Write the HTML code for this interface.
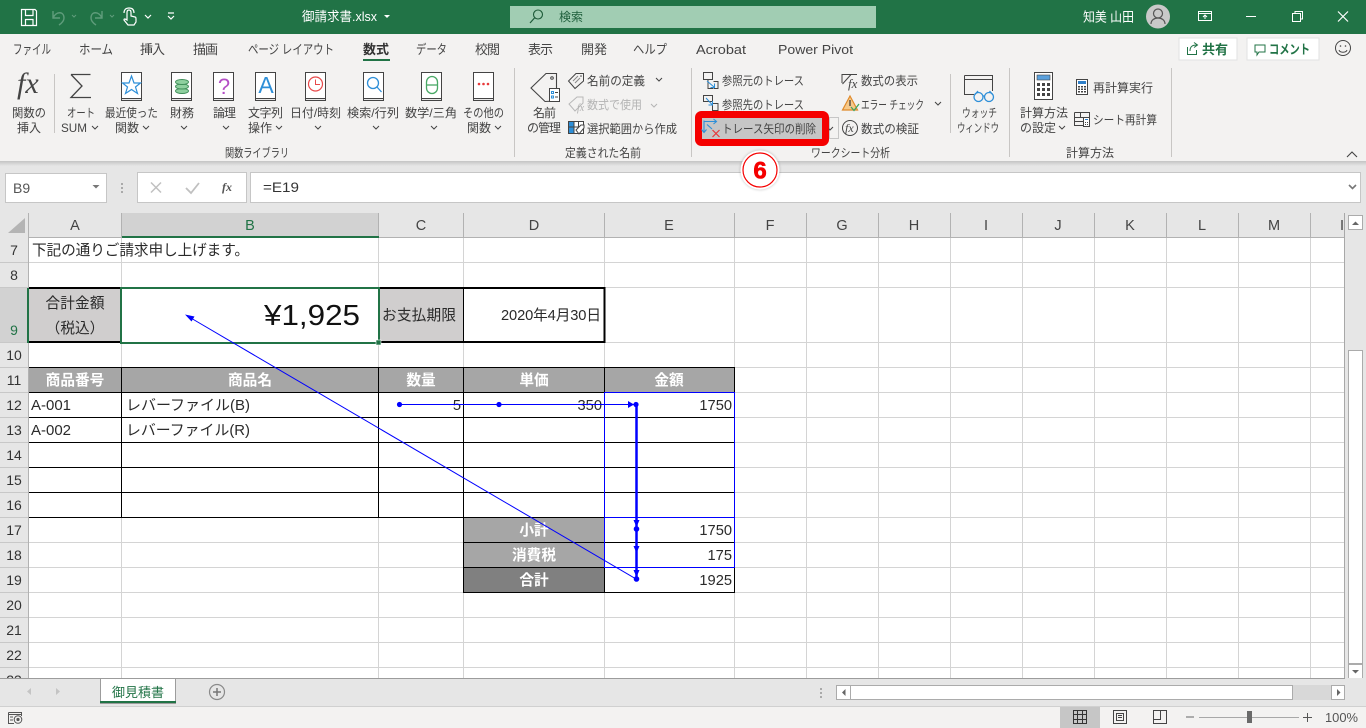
<!DOCTYPE html>
<html lang="ja"><head><meta charset="utf-8"><title>御請求書.xlsx - Excel</title>
<style>
html,body{margin:0;padding:0;width:1366px;height:728px;overflow:hidden;background:#e6e6e6}
svg{display:block;position:absolute;left:0;top:0}
text{font-family:"Liberation Sans","Noto Sans CJK JP",sans-serif;font-size:12px;fill:#444}
.r text{font-size:12px}
.c text,text.c{font-size:14.67px;fill:#2a2a2a}
.h text{font-size:14.5px;fill:#444;text-anchor:middle}
.w text{font-size:14.67px;fill:#fff;font-weight:700;text-anchor:middle}
.n text{font-size:14px;fill:#333;text-anchor:middle}
.t text{font-size:13px}
.e{text-anchor:end}
.m{text-anchor:middle}
.b{fill:none;stroke:#000;stroke-width:1}
</style></head><body>
<svg width="1366" height="728" viewBox="0 0 1366 728" xmlns="http://www.w3.org/2000/svg">
<defs>
<linearGradient id="sh" x1="0" y1="0" x2="0" y2="1"><stop offset="0" stop-color="#c4c4c4"/><stop offset="1" stop-color="#e6e6e6"/></linearGradient>
<filter id="gl" x="-30%" y="-30%" width="160%" height="160%"><feGaussianBlur stdDeviation="1.2"/></filter>
<symbol id="bk" viewBox="0 0 22 29" width="22" height="29"><path d="M.5 .5H20.500V28.500H2.500Q.5 28.500 .5 26.500Z" fill="#fff" stroke="#444"/><path d="M.5 26.500H20.500V28.500H.5Z" fill="#e8e8e8" stroke="#444"/></symbol>
</defs>
<!-- title bar -->
<rect width="1366" height="34" fill="#217346"/>
<g fill="none" stroke="#fff" stroke-width="1.2"><path d="M21.500 9.500H35L36.500 11V25.500H21.500Z"/><path d="M25.500 9.500V15.500H33V9.500M25.500 25.500V19.500H33V25.500M25.500 19.500H33"/></g>
<g fill="none" stroke="#5f9c7b" stroke-width="1.4"><path d="M53 11V18H60M53 18C56 11 64 11 64 18C64 21 62 23 59 25"/><path d="M102 11V18H95M102 18C99 11 91 11 91 18C91 21 93 23 96 25"/><path d="M72 15l2 2 2-2M110 15l2 2 2-2" stroke-width="1"/></g>
<path d="M127 20V12.500Q127 10 129 10T131 12.500V16L135 17Q136 17 136 19V22L134 25H128L124 20Q124 18 127 20ZM124 13Q124 8 129 8T134 13" fill="none" stroke="#fff" stroke-width="1.200"/>
<path d="M145 15l3 3 3-3M168 13h6M168 16l3 3 3-3" fill="none" stroke="#fff" stroke-width="1.200"/>
<text x="302" y="21" textLength="75" lengthAdjust="spacingAndGlyphs" style="fill:#fff;font-size:13px">御請求書.xlsx</text>
<path d="M384 15h6l-3 3z" fill="#fff"/>
<rect x="510" y="6" width="366" height="22" fill="#a1cdb3"/>
<circle cx="538" cy="14.500" r="4.500" fill="none" stroke="#1d5a38" stroke-width="1.100"/><path d="M534.500 18L530 23" stroke="#1d5a38" stroke-width="1.200"/>
<text x="559" y="21" textLength="24" style="fill:#1f5f3c;font-size:12px">検索</text>
<text x="1083" y="21.500" textLength="51" lengthAdjust="spacingAndGlyphs" style="fill:#fff;font-size:13px">知美 山田</text>
<circle cx="1158" cy="16.500" r="12" fill="#c9c9c9"/><circle cx="1158" cy="13.500" r="4.500" fill="none" stroke="#555" stroke-width="1.200"/><path d="M1151 24C1151 16 1165 16 1165 24" fill="none" stroke="#555" stroke-width="1.200"/>
<g fill="none" stroke="#fff" stroke-width="1"><path d="M1198.500 11.500H1211.500V20.500H1198.500ZM1198.500 13.500H1211.500M1205 19V15M1203 17l2-2 2 2"/><path d="M1246 16.500H1256"/><path d="M1292.500 13.500H1300.500V21.500H1292.500ZM1295 13V11.500H1302.500V19H1301"/><path d="M1338 11.500L1348 21.500M1348 11.500L1338 21.500" stroke-width="1.200"/></g>
<!-- ribbon -->
<rect y="34" width="1366" height="127" fill="#f3f2f1"/>
<rect y="161" width="1366" height="5" fill="url(#sh)"/>
<rect y="166" width="1366" height="512" fill="#e6e6e6"/>
<g class="t">
<text x="13" y="54" textLength="38" lengthAdjust="spacingAndGlyphs">ファイル</text>
<text x="79" y="54" textLength="34" lengthAdjust="spacingAndGlyphs">ホーム</text>
<text x="140" y="54" textLength="25">挿入</text>
<text x="193" y="54" textLength="25">描画</text>
<text x="248" y="54" textLength="86" lengthAdjust="spacingAndGlyphs">ページ レイアウト</text>
<text x="363" y="54" textLength="26" style="font-weight:700;fill:#333">数式</text>
<text x="416" y="54" textLength="31" lengthAdjust="spacingAndGlyphs">データ</text>
<text x="475" y="54" textLength="25">校閲</text>
<text x="528" y="54" textLength="25">表示</text>
<text x="581" y="54" textLength="26">開発</text>
<text x="633" y="54" textLength="34" lengthAdjust="spacingAndGlyphs">ヘルプ</text>
<text x="696" y="54" textLength="50" lengthAdjust="spacingAndGlyphs">Acrobat</text>
<text x="778" y="54" textLength="75" lengthAdjust="spacingAndGlyphs">Power Pivot</text>
</g>
<rect x="363" y="59" width="27" height="2" fill="#217346"/>
<!-- share -->
<rect x="1179" y="38" width="58" height="22" fill="#fff" stroke="#e2e2e2"/>
<rect x="1247" y="38" width="72" height="22" fill="#fff" stroke="#e2e2e2"/>
<path d="M1188 47.500H1187.500V54.500H1196.500V50M1190 51C1190 46 1193 45 1197 45M1194 42.500L1197.500 45L1194 47.500" fill="none" stroke="#217346"/>
<text x="1202" y="54" textLength="26" style="fill:#217346;font-size:13px;font-weight:700">共有</text>
<path d="M1255 45H1265V52H1259L1257 55V52H1255Z" fill="none" stroke="#217346"/>
<text x="1269" y="54" textLength="41" lengthAdjust="spacingAndGlyphs" style="fill:#217346;font-size:13px;font-weight:700">コメント</text>
<circle cx="1343" cy="48" r="7.500" fill="none" stroke="#444"/><path d="M1339 50C1340 53 1346 53 1347 50" fill="none" stroke="#444"/><circle cx="1340.500" cy="46" r=".8" fill="#444"/><circle cx="1345.500" cy="46" r=".8" fill="#444"/>
<!-- separators -->
<path d="M54.500 74V133M514.500 68V157M691.500 68V157M950.500 74V133M1009.500 68V157M1171.500 68V157" stroke="#c8c6c4"/>
<!-- function lib icons -->
<text x="17" y="93" style="font-family:'Liberation Serif',serif;font-style:italic;font-size:30px;fill:#444">fx</text>
<path d="M71 74.500H90.500M71 74.500L82 86 71 97.500H91" fill="none" stroke="#444" stroke-width="1.300"/>
<use href="#bk" x="121" y="72"/><use href="#bk" x="171" y="72"/><use href="#bk" x="213" y="72"/><use href="#bk" x="255" y="72"/><use href="#bk" x="305" y="72"/><use href="#bk" x="363" y="72"/><use href="#bk" x="421" y="72"/><use href="#bk" x="473" y="72"/>
<path d="M131.500 76L134 83H140.500L135.500 87L137.500 93.500L131.500 89.500L125.500 93.500L127.500 87L122.500 83H129Z" fill="none" stroke="#2e8fd8" stroke-width="1.200"/>
<g fill="#8fd09f" stroke="#3e8e58" stroke-width=".9"><ellipse cx="182" cy="91" rx="6.500" ry="2.500"/><ellipse cx="182" cy="86.500" rx="6.500" ry="2.500"/><ellipse cx="182" cy="82" rx="6.500" ry="2.500"/></g>
<text x="224" y="94" class="m" style="font-size:22px;fill:#b44fc6">?</text>
<text x="266" y="93" class="m" style="font-size:23px;fill:#2e8fd8">A</text>
<circle cx="315.500" cy="84" r="7" fill="none" stroke="#e8494a" stroke-width="1.200"/><path d="M315.500 79.500V84.500H320" fill="none" stroke="#e8494a"/>
<circle cx="373" cy="83" r="5.500" fill="none" stroke="#2e8fd8" stroke-width="1.300"/><path d="M377 87L381.500 92" stroke="#2e8fd8" stroke-width="1.300"/>
<rect x="426.500" y="76.500" width="11" height="17" rx="5.500" fill="none" stroke="#49a865" stroke-width="1.300"/><path d="M427 85H437" stroke="#49a865" stroke-width="1.300"/>
<g fill="#e8393a"><circle cx="479" cy="84" r="1.300"/><circle cx="483.500" cy="84" r="1.300"/><circle cx="488" cy="84" r="1.300"/></g>
<!-- function lib labels -->
<g class="r">
<text x="12" y="117" textLength="34" lengthAdjust="spacingAndGlyphs">関数の</text><text x="17" y="132" textLength="24">挿入</text>
<text x="67" y="117" textLength="28" lengthAdjust="spacingAndGlyphs">オート</text><text x="61" y="132" textLength="26" lengthAdjust="spacingAndGlyphs">SUM</text>
<text x="105" y="117" textLength="53" lengthAdjust="spacingAndGlyphs">最近使った</text><text x="115" y="132" textLength="24">関数</text>
<text x="170" y="117" textLength="24">財務</text>
<text x="213" y="117" textLength="23">論理</text>
<text x="248" y="117" textLength="35">文字列</text><text x="248" y="132" textLength="24">操作</text>
<text x="290" y="117" textLength="51" lengthAdjust="spacingAndGlyphs">日付/時刻</text>
<text x="347" y="117" textLength="52" lengthAdjust="spacingAndGlyphs">検索/行列</text>
<text x="405" y="117" textLength="52" lengthAdjust="spacingAndGlyphs">数学/三角</text>
<text x="463" y="117" textLength="41" lengthAdjust="spacingAndGlyphs">その他の</text><text x="467" y="132" textLength="24">関数</text>
<text x="225" y="157" textLength="64" lengthAdjust="spacingAndGlyphs">関数ライブラリ</text>
<!-- names -->
<text x="533" y="117" textLength="23">名前</text><text x="527" y="132" textLength="34">の管理</text>
<text x="587" y="85" textLength="58" lengthAdjust="spacingAndGlyphs">名前の定義</text>
<text x="587" y="109" textLength="55" lengthAdjust="spacingAndGlyphs" style="fill:#b4b4b4">数式で使用</text>
<text x="587" y="133" textLength="90" lengthAdjust="spacingAndGlyphs">選択範囲から作成</text>
<text x="565" y="157" textLength="76" lengthAdjust="spacingAndGlyphs">定義された名前</text>
<!-- audit -->
<text x="722" y="85" textLength="82" lengthAdjust="spacingAndGlyphs">参照元のトレース</text>
<text x="722" y="109" textLength="82" lengthAdjust="spacingAndGlyphs">参照先のトレース</text>
<text x="861" y="85" textLength="57" lengthAdjust="spacingAndGlyphs">数式の表示</text>
<text x="861" y="109" textLength="63" lengthAdjust="spacingAndGlyphs">エラー チェック</text>
<text x="861" y="133" textLength="58" lengthAdjust="spacingAndGlyphs">数式の検証</text>
<text x="811" y="157" textLength="79" lengthAdjust="spacingAndGlyphs">ワークシート分析</text>
<text x="962" y="117" textLength="35" lengthAdjust="spacingAndGlyphs">ウォッチ</text><text x="957" y="132" textLength="42" lengthAdjust="spacingAndGlyphs">ウィンドウ</text>
<!-- calc -->
<text x="1020" y="117" textLength="48">計算方法</text><text x="1020" y="132" textLength="36">の設定</text>
<text x="1093" y="92" textLength="60">再計算実行</text>
<text x="1093" y="124" textLength="64" lengthAdjust="spacingAndGlyphs">シート再計算</text>
<text x="1066" y="157" textLength="48">計算方法</text>
</g>
<!-- chevrons -->
<path d="M92 126l3 3 3-3M143 126l3 3 3-3M181 126l3 3 3-3M223 126l3 3 3-3M276 126l3 3 3-3M315 126l3 3 3-3M373 126l3 3 3-3M431 126l3 3 3-3M495 126l3 3 3-3M656 78l3 3 3-3M935 102l3 3 3-3M1059 126l3 3 3-3" fill="none" stroke="#444"/>
<path d="M651 104l3 3 3-3" fill="none" stroke="#b4b4b4"/>
<path d="M1347 157l5-5 5 5" fill="none" stroke="#444" stroke-width="1.100"/>
<!-- names icons -->
<path d="M546 73.500H556.500V101L545 101.500L531 88Z" fill="none" stroke="#444" stroke-width="1.100"/><circle cx="552" cy="78" r="1.300" fill="none" stroke="#444"/>
<rect x="549.500" y="88.500" width="10" height="13" fill="#fff" stroke="#444"/><path d="M551.500 91.500h2v2h-2zM551.500 96h2v2h-2z" fill="none" stroke="#2e8fd8"/><path d="M555 92.500h3M555 97h3" stroke="#444"/>
<path d="M576 73.500H583.500V81L575 88.500L568.500 81Z" fill="none" stroke="#444"/><path d="M573 81l5-5M575 83l5-5" stroke="#888"/><circle cx="581" cy="76" r=".8" fill="#444"/>
<path d="M577 97H583V103L575 111L569 104Z" fill="none" stroke="#b8b8b8"/><text x="577" y="111" style="font-family:'Liberation Serif',serif;font-style:italic;font-size:10px;fill:#b0b0b0">fx</text>
<rect x="568.500" y="121.500" width="15" height="12" fill="#fff" stroke="#444"/><rect x="569" y="127" width="5" height="6" fill="#2e8fd8"/><rect x="569" y="122" width="5" height="5" fill="#2e8fd8"/><path d="M574 121.500V133M568.500 127H583.500M578.500 121.500V127" stroke="#444" fill="none"/><path d="M576 130L581 125L584 125V128L579 134Z" fill="#fff" stroke="#444"/>
<!-- audit icons -->
<path d="M703.500 72.500H712.500V79.500H703.500ZM708 80V88.500H713M713.500 81.500H718V88.500H713.500" fill="none" stroke="#444"/><path d="M707 81L714 87M710.500 87.500H714.500V83.500" fill="none" stroke="#2e8fd8"/>
<path d="M703.500 95.500H712.500V101.500H703.500ZM712.500 103.500H718V110.500H712.500Z" fill="none" stroke="#444"/><path d="M706 98L712 104.500M708.500 105H712.500V101" fill="none" stroke="#2e8fd8"/>
<path d="M842 83V74.500H857M842.500 84L851 74.500" fill="none" stroke="#444"/><text x="848" y="88" style="font-family:'Liberation Serif',serif;font-style:italic;font-size:13px;fill:#444">fx</text>
<path d="M850 96L857.500 110H842.500Z" fill="#f6c98a" stroke="#e08a2a" stroke-width="1.200"/><path d="M850 100V106" stroke="#333" stroke-width="1.200"/><path d="M851 107L854 110.500L859 104" fill="none" stroke="#3fa55e" stroke-width="1.300"/>
<circle cx="850" cy="128" r="7.500" fill="none" stroke="#444"/><text x="845" y="132" style="font-family:'Liberation Serif',serif;font-style:italic;font-size:12px;fill:#444">fx</text>
<path d="M964.500 75.500H992.500V91M964.500 75.500V94.500H974M964.500 79.500H992.500" fill="none" stroke="#444"/>
<g fill="none" stroke="#2e8fd8" stroke-width="1.300"><circle cx="978.500" cy="97" r="4.500"/><circle cx="989" cy="97" r="4.500"/><path d="M983 96H984.500M974.500 95L978 91M993 95L989.500 91"/></g>
<!-- calc icons -->
<rect x="1034.500" y="72.500" width="18" height="27" fill="#fff" stroke="#444"/><rect x="1037" y="75" width="13" height="5" fill="#5aa0dc" stroke="#444" stroke-width=".6"/>
<g fill="#444"><path d="M1037 83h3v3h-3zM1042 83h3v3h-3zM1047 83h3v3h-3zM1037 88h3v3h-3zM1042 88h3v3h-3zM1047 88h3v3h-3zM1037 93h3v3h-3zM1042 93h3v3h-3zM1047 93h3v3h-3z"/></g>
<rect x="1076.500" y="79.500" width="11" height="15" fill="#fff" stroke="#444"/><rect x="1078" y="81" width="8" height="3" fill="#2e7fc8"/><path d="M1078 86h2v1.500h-2zM1081 86h2v1.500h-2zM1084 86h2v1.500h-2zM1078 88.500h2v1.500h-2zM1081 88.500h2v1.500h-2zM1084 88.500h2v1.500h-2zM1078 91h2v1.500h-2zM1081 91h2v1.500h-2zM1084 91h2v1.500h-2z" fill="#444"/>
<path d="M1074.500 112.500H1089.500V117M1074.500 112.500V125.500H1083M1074.500 117.500H1083M1074.500 121.500H1083M1080.500 112.500V117" fill="none" stroke="#444"/><rect x="1083.500" y="117.500" width="6" height="9" fill="#fff" stroke="#444"/><path d="M1085 119h3v1h-3z" fill="#2e7fc8"/><path d="M1085 122h1v1h-1zM1087 122h1v1h-1zM1085 124h1v1h-1zM1087 124h1v1h-1z" fill="#444"/>
<!-- highlight -->
<rect x="829.500" y="117.500" width="9" height="21" fill="none" stroke="#c6c6c6"/>
<path d="M827 127l3 3 3-3" fill="none" stroke="#444"/>
<rect x="698.500" y="114.500" width="127" height="28" rx="3" fill="#c6c6c6" stroke="#f50000" stroke-width="7"/>
<path d="M704 120.500V132M701.500 129.500L704 132.500L706.500 129.500M704 121.500H716M713.500 119L716.500 121.500L713.500 124M707 124.500L712 129" fill="none" stroke="#2e8fd8" stroke-width="1.100"/><path d="M712.500 130L719.500 137M719.500 130L712.500 137" stroke="#e8393a" stroke-width="1.200"/>
<text x="722" y="133" textLength="94" lengthAdjust="spacingAndGlyphs">トレース矢印の削除</text>
<!-- formula bar -->
<rect x="5.500" y="173.500" width="101" height="29" fill="#fff" stroke="#c6c6c6"/>
<text x="13" y="193" style="font-size:14px;fill:#555">B9</text><path d="M92.500 185h7l-3.500 3.500z" fill="#777"/>
<g fill="#aaa"><rect x="121" y="183" width="2" height="2"/><rect x="121" y="187" width="2" height="2"/><rect x="121" y="191" width="2" height="2"/></g>
<rect x="137.500" y="172.500" width="109" height="30" fill="#fff" stroke="#c6c6c6"/>
<rect x="250.500" y="172.500" width="1110" height="30" fill="#fff" stroke="#c6c6c6"/>
<path d="M151 182.500L161 192.500M161 182.500L151 192.500" stroke="#c0c0c0" stroke-width="1.500"/>
<path d="M186 188L191 193L199 183" fill="none" stroke="#c0c0c0" stroke-width="1.800"/>
<text x="222" y="191" style="font-family:'Liberation Serif',serif;font-style:italic;font-weight:700;font-size:12px;fill:#555">fx</text>
<text x="263" y="192" textLength="36" lengthAdjust="spacingAndGlyphs" style="font-size:13.500px;fill:#333">=E19</text>
<path d="M1349 185l3.500 3.500 3.500-3.500" fill="none" stroke="#777" stroke-width="1.600"/>
<!-- sheet white -->
<rect x="29" y="238" width="1316" height="440" fill="#fff"/>
<path d="M25 218V233H8Z" fill="#b4b4b4"/>
<!-- header column -->
<rect x="122" y="213" width="257" height="23" fill="#d2d2d2"/>
<path d="M28.500 213V678M121.500 213V237M378.500 213V237M463.500 213V237M604.500 213V237M734.500 213V237M806.500 213V237M878.500 213V237M950.500 213V237M1022.500 213V237M1094.500 213V237M1166.500 213V237M1238.500 213V237M1310.500 213V237" stroke="#b2b2b2"/>
<path d="M29 237.500H1345" stroke="#b2b2b2"/>
<rect x="122" y="236" width="257" height="2" fill="#217346"/>
<g class="h">
<text x="75" y="230">A</text><text x="250" y="230" style="fill:#217346">B</text><text x="421" y="230">C</text><text x="534" y="230">D</text><text x="669" y="230">E</text><text x="770" y="230">F</text><text x="842" y="230">G</text><text x="914" y="230">H</text><text x="986" y="230">I</text><text x="1058" y="230">J</text><text x="1130" y="230">K</text><text x="1202" y="230">L</text><text x="1274" y="230">M</text><text x="1342" y="230">I</text>
</g>
<!-- grid -->
<path d="M121.500 238V678M378.500 238V678M463.500 238V678M604.500 238V678M734.500 238V678M806.500 238V678M878.500 238V678M950.500 238V678M1022.500 238V678M1094.500 238V678M1166.500 238V678M1238.500 238V678M1310.500 238V678" stroke="#d4d4d4"/>
<path d="M29 262.500H1345M29 287.500H1345M29 342.500H1345M29 367.500H1345M29 392.500H1345M29 417.500H1345M29 442.500H1345M29 467.500H1345M29 492.500H1345M29 517.500H1345M29 542.500H1345M29 567.500H1345M29 592.500H1345M29 617.500H1345M29 642.500H1345M29 667.500H1345" stroke="#d4d4d4"/>
<path d="M1344.500 213V678" stroke="#a8a8a8"/>
<!-- row header -->
<rect x="0" y="288" width="28" height="55" fill="#d2d2d2"/>
<path d="M0 262.500H28M0 287.500H28M0 342.500H28M0 367.500H28M0 392.500H28M0 417.500H28M0 442.500H28M0 467.500H28M0 492.500H28M0 517.500H28M0 542.500H28M0 567.500H28M0 592.500H28M0 617.500H28M0 642.500H28M0 667.500H28" stroke="#c8c8c8"/>
<rect x="27" y="288" width="2" height="55" fill="#217346"/>
<g class="n">
<text x="14" y="255">7</text><text x="14" y="280">8</text><text x="14" y="335" style="fill:#217346">9</text><text x="14" y="360">10</text><text x="14" y="385">11</text><text x="14" y="410">12</text><text x="14" y="435">13</text><text x="14" y="460">14</text><text x="14" y="485">15</text><text x="14" y="510">16</text><text x="14" y="535">17</text><text x="14" y="560">18</text><text x="14" y="585">19</text><text x="14" y="610">20</text><text x="14" y="635">21</text><text x="14" y="660">22</text><text x="14" y="685">23</text>
</g>
<!-- fills -->
<rect x="29" y="288" width="92" height="54" fill="#d0cece"/>
<rect x="379" y="288" width="85" height="54" fill="#d0cece"/>
<rect x="29" y="368" width="706" height="25" fill="#a6a6a6"/>
<rect x="464" y="518" width="141" height="50" fill="#a6a6a6"/>
<rect x="464" y="568" width="141" height="25" fill="#808080"/>
<!-- borders -->
<path class="b" d="M29 367.500H735M29 392.500H735M29 417.500H735M29 442.500H735M29 467.500H735M29 492.500H735M29 517.500H735M464 542.500H735M464 567.500H735M464 592.500H735M121.500 368V518M378.500 368V518M463.500 368V593M604.500 368V593M734.500 368V593"/>
<path d="M29 288H604.500V342H29" fill="none" stroke="#000" stroke-width="2"/>
<path d="M463.500 288V342" stroke="#000"/>
<!-- selection -->
<rect x="121" y="288" width="258" height="55" fill="#fff" stroke="#217346" stroke-width="2"/>
<rect x="376" y="340" width="5" height="5" fill="#217346" stroke="#fff" stroke-width=".6"/>
<!-- cell text -->
<g class="c">
<text x="32" y="255" textLength="217">下記の通りご請求申し上げます。</text>
<text x="75" y="308" class="m" textLength="59">合計金額</text>
<text x="75" y="333" class="m">（税込）</text>
<text x="382" y="320" textLength="74">お支払期限</text>
<text x="601" y="320" class="e" textLength="100">2020年4月30日</text>
<text x="31" y="410" textLength="40" lengthAdjust="spacingAndGlyphs">A-001</text>
<text x="31" y="435" textLength="40" lengthAdjust="spacingAndGlyphs">A-002</text>
<text x="126" y="410" textLength="124" lengthAdjust="spacingAndGlyphs">レバーファイル(B)</text>
<text x="126" y="435" textLength="124" lengthAdjust="spacingAndGlyphs">レバーファイル(R)</text>
<text x="461" y="410" class="e">5</text>
<text x="602" y="410" class="e">350</text>
<text x="732" y="410" class="e">1750</text>
<text x="732" y="535" class="e">1750</text>
<text x="732" y="560" class="e">175</text>
<text x="732" y="585" class="e">1925</text>
</g>
<text x="360" y="325" class="e" textLength="96" lengthAdjust="spacingAndGlyphs" style="font-size:29px;fill:#111">¥1,925</text>
<g class="w">
<text x="75" y="385">商品番号</text><text x="250" y="385">商品名</text><text x="421" y="385">数量</text><text x="534" y="385">単価</text><text x="669" y="385">金額</text>
<text x="534" y="535">小計</text><text x="534" y="560">消費税</text><text x="534" y="585">合計</text>
</g>
<!-- blue trace -->
<rect x="604.500" y="392.500" width="130" height="175" fill="none" stroke="#0000ff"/>
<path d="M605 517.500H735" stroke="#0000ff"/>
<path d="M399 404.500H636" stroke="#0000ff"/>
<path d="M636.500 405V579" stroke="#0000ff" stroke-width="2.500"/>
<path d="M636 579L190 317.500" stroke="#0000ff"/>
<g fill="#0000ff">
<circle cx="399.500" cy="404.500" r="2.600"/><circle cx="499" cy="404.500" r="2.600"/><circle cx="636" cy="404.500" r="2.600"/>
<path d="M628 401L634 404.500L628 408Z"/>
<circle cx="636.500" cy="529" r="2.800"/><circle cx="636.500" cy="579" r="2.800"/>
<path d="M633.500 520L639.500 520L636.500 527Z"/><path d="M633.500 546L639.500 546L636.500 553Z"/><path d="M633.500 570L639.500 570L636.500 577Z"/>
<path d="M185 314.500L194.500 316.500L191.500 321.500Z"/>
</g>
<!-- scrollbar vertical -->
<rect x="1345" y="213" width="21" height="465" fill="#e6e6e6"/>
<rect x="1348.500" y="215.500" width="14" height="14" fill="#fff" stroke="#ababab"/><path d="M1352 225l3.500-3.500 3.500 3.500z" fill="#666"/>
<rect x="1348.500" y="350.500" width="14" height="313" fill="#fff" stroke="#ababab"/>
<rect x="1348.500" y="664.500" width="14" height="14" fill="#fff" stroke="#ababab"/><path d="M1352 670l3.500 3.500 3.500-3.500z" fill="#666"/>
<!-- tabs -->
<rect y="678" width="1366" height="28" fill="#e6e6e6"/>
<path d="M0 678.500H1345" stroke="#9c9c9c"/>
<path d="M27 691.500l4-3.500v7zM60 691.500l-4-3.500v7z" fill="#c4c4c4"/>
<rect x="100.500" y="678.500" width="75" height="25" fill="#fff" stroke="#9c9c9c"/>
<rect x="100" y="701" width="76" height="2" fill="#217346"/>
<text x="138" y="697" class="m" textLength="52" style="font-size:13px;fill:#217346">御見積書</text>
<circle cx="217" cy="692" r="7.500" fill="none" stroke="#8a8a8a" stroke-width="1.200"/><path d="M217 688V696M213 692H221" stroke="#777" stroke-width="1.500"/>
<g fill="#aaa"><rect x="820" y="688" width="2" height="2"/><rect x="820" y="692" width="2" height="2"/><rect x="820" y="696" width="2" height="2"/></g>
<rect x="836" y="685" width="509" height="15" fill="#d8d8d8"/>
<rect x="836.500" y="685.500" width="14" height="14" fill="#fff" stroke="#ababab"/><path d="M845.500 689v7l-3.500-3.500z" fill="#666"/>
<rect x="850.500" y="685.500" width="442" height="14" fill="#fff" stroke="#ababab"/>
<rect x="1331.500" y="685.500" width="13" height="14" fill="#fff" stroke="#ababab"/><path d="M1337 689v7l3.500-3.500z" fill="#666"/>
<!-- status -->
<rect y="706" width="1366" height="22" fill="#f3f2f1"/>
<path d="M0 706.500H1366" stroke="#d0d0d0"/>
<path d="M8.500 712.500H21.500V716M8.500 712.500V723.500H14M8.500 714.500H21.500M10 717h3M10 720h3" fill="none" stroke="#555"/><circle cx="18" cy="719.500" r="3.800" fill="none" stroke="#555"/><circle cx="18" cy="719.500" r="1.600" fill="#555"/>
<rect x="1060" y="707" width="40" height="21" fill="#c6c6c6"/>
<path d="M1073.500 710.500H1086.500V723.500H1073.500ZM1077.500 710.500V723.500M1082.500 710.500V723.500M1073.500 714.500H1086.500M1073.500 719.500H1086.500" fill="none" stroke="#333"/>
<path d="M1113.500 710.500H1126.500V723.500H1113.500ZM1116.500 713.500H1123.500V720.500H1116.500ZM1118 715.500H1122M1118 717.500H1122" fill="none" stroke="#444"/>
<path d="M1153.500 710.500H1166.500V723.500H1153.500ZM1153.500 719.500H1160.500V710.500" fill="none" stroke="#444"/>
<path d="M1186 717H1194" stroke="#666"/><path d="M1199 717.500H1299" stroke="#a8a8a8"/>
<rect x="1247" y="711" width="5" height="12" fill="#6a6a6a"/>
<path d="M1303 717.500H1312M1307.500 713V722" stroke="#555"/>
<text x="1325" y="722" textLength="33" lengthAdjust="spacingAndGlyphs" style="font-size:13px;fill:#555">100%</text>
<!-- callout -->
<circle cx="760" cy="170" r="20" fill="#000" opacity=".18" filter="url(#gl)"/>
<circle cx="760" cy="170" r="19.500" fill="#fff"/>
<circle cx="760" cy="170" r="17" fill="#fff" stroke="#f50000" stroke-width="1.200"/>
<text x="760" y="178.500" class="m" style="font-size:24px;font-weight:700;fill:#f50000;stroke:#f50000;stroke-width:.6">6</text>
</svg>
</body></html>
